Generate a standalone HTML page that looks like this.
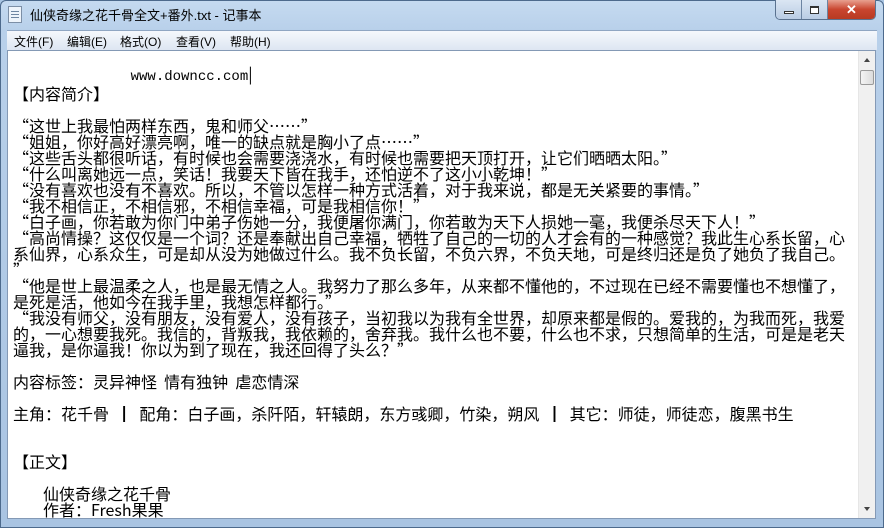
<!DOCTYPE html>
<html><head><meta charset="utf-8"><style>
*{margin:0;padding:0;box-sizing:border-box}
body{width:884px;height:528px;overflow:hidden;background:#a9c5e3;font-family:"Liberation Sans","Noto Sans CJK SC",sans-serif;position:relative}
.frame{position:absolute;left:0;top:0;width:884px;height:528px;background:linear-gradient(180deg,#c5daf0 0,#b8d0ea 30px,#a9c4e2 100%);border:1px solid #4d6a8c;border-radius:6px 6px 0 0}
.title{position:absolute;left:30px;top:5px;font-size:13px;color:#000}
.icon{position:absolute;left:8px;top:6px;width:14px;height:17px;background:#eef4fb;border:1px solid #7c8fa6}
.icon:before{content:"";position:absolute;left:2px;top:4px;width:8px;height:8px;background:repeating-linear-gradient(180deg,#6e86a2 0 1px,transparent 1px 3px)}
.btns{position:absolute;left:775px;top:0;height:20px;width:101px;border:1px solid #5a7290;border-top:none;border-radius:0 0 5px 5px;overflow:hidden;display:flex}
.b{height:19px;display:flex;align-items:center;justify-content:center;background:linear-gradient(#dbe6f3,#b9cce4);border-right:1px solid #6c84a2}
.b1{width:27px}.b2{width:26px}.b3{width:48px;background:linear-gradient(#e8a08f,#c9452f 50%,#b83a22);border:none;color:#fff;font-weight:bold;font-size:13px}
.menu{position:absolute;left:7px;top:30px;width:870px;height:20px;background:linear-gradient(#f5f8fc,#dde6f2);border-top:1px solid #8fa6c2;font-size:12px}
.menu span{position:absolute;top:2px}
.edit{position:absolute;left:7px;top:50px;width:869px;height:469px;background:#fff;border:1px solid #8499b5}
.sb{position:absolute;right:0;top:0;width:17px;height:467px;background:#f0f0f0;border-left:1px solid #e6e6e6}
.thumb{position:absolute;left:1px;top:19px;width:14px;height:15px;border:1px solid #9a9a9a;border-radius:2px;background:linear-gradient(90deg,#f4f4f4,#dcdcdc)}
.ar{position:absolute;left:5px;width:0;height:0;border-left:3px solid transparent;border-right:3px solid transparent}
pre{position:absolute;left:5px;top:14px;font-family:"Noto Sans CJK SC","WenQuanYi Zen Hei",sans-serif;font-size:16px;line-height:16px;color:#000;white-space:pre;letter-spacing:0}
.url{font-family:"Liberation Mono",monospace;font-size:14px}
.ind{padding-left:30px;display:inline-block}
</style></head><body>
<div class="frame"></div>
<div class="icon"></div>
<div class="title">仙侠奇缘之花千骨全文+番外.txt - 记事本</div>
<div class="btns"><div class="b b1"><div style="width:10px;height:3px;border:1px solid #333;background:#fff;margin-top:6px"></div></div><div class="b b2"><div style="width:9px;height:8px;border:1px solid #333;border-top-width:2px;background:#fff"></div></div><div class="b b3">✕</div></div>
<div class="menu"><span style="left:7px">文件(F)</span><span style="left:60px">编辑(E)</span><span style="left:113px">格式(O)</span><span style="left:169px">查看(V)</span><span style="left:223px">帮助(H)</span></div>
<div class="edit">
<pre><span class="url">              www.downcc.com</span>|
【内容简介】

“这世上我最怕两样东西，鬼和师父……”
“姐姐，你好高好漂亮啊，唯一的缺点就是胸小了点……”
“这些舌头都很听话，有时候也会需要浇浇水，有时候也需要把天顶打开，让它们晒晒太阳。”
“什么叫离她远一点，笑话！我要天下皆在我手，还怕逆不了这小小乾坤！”
“没有喜欢也没有不喜欢。所以，不管以怎样一种方式活着，对于我来说，都是无关紧要的事情。”
“我不相信正，不相信邪，不相信幸福，可是我相信你！”
“白子画，你若敢为你门中弟子伤她一分，我便屠你满门，你若敢为天下人损她一毫，我便杀尽天下人！”
“高尚情操？这仅仅是一个词？还是奉献出自己幸福，牺牲了自己的一切的人才会有的一种感觉？我此生心系长留，心
系仙界，心系众生，可是却从没为她做过什么。我不负长留，不负六界，不负天地，可是终归还是负了她负了我自己。
”
“他是世上最温柔之人，也是最无情之人。我努力了那么多年，从来都不懂他的，不过现在已经不需要懂也不想懂了，
是死是活，他如今在我手里，我想怎样都行。”
“我没有师父，没有朋友，没有爱人，没有孩子，当初我以为我有全世界，却原来都是假的。爱我的，为我而死，我爱
的，一心想要我死。我信的，背叛我，我依赖的，舍弃我。我什么也不要，什么也不求，只想简单的生活，可是是老天
逼我，是你逼我！你以为到了现在，我还回得了头么？”

内容标签：灵异神怪  情有独钟  虐恋情深

主角：花千骨  ┃  配角：白子画，杀阡陌，轩辕朗，东方彧卿，竹染，朔风  ┃  其它：师徒，师徒恋，腹黑书生


【正文】

<span class="ind">仙侠奇缘之花千骨</span>
<span class="ind">作者：Fresh果果</span></pre>
<div class="sb"><div class="ar" style="top:7px;border-bottom:4px solid #444"></div><div class="thumb"></div><div class="ar" style="bottom:7px;border-top:4px solid #444"></div></div>
</div>
</body></html>
